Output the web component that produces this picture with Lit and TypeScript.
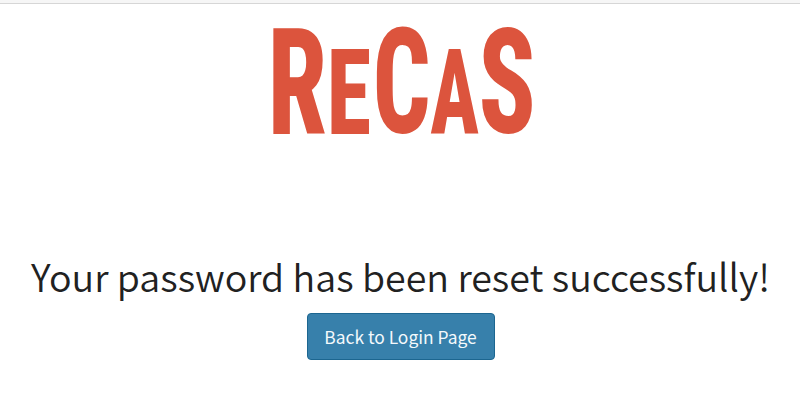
import { LitElement, html, svg, css } from "lit";
import { customElement } from "lit/decorators.js";

// Each letter of the condensed wordmark: left edge, baseline, x and y scale.
const LETTERS = [
  { ch: "R", x: 267.8, y: 133.5, sx: 1.06, sy: 1.477 },
  { ch: "E", x: 326.8, y: 133.5, sx: 0.905, sy: 1.189 },
  { ch: "C", x: 372.8, y: 132.6, sx: 1.01, sy: 1.46 },
  { ch: "A", x: 430.3, y: 133.5, sx: 0.81, sy: 1.196 },
  { ch: "S", x: 478.6, y: 132.6, sx: 1.05, sy: 1.46 },
];

@customElement("recas-logo")
export class RecasLogo extends LitElement {
  static styles = css`
    :host { display: block; }
    svg { display: block; overflow: visible; }
    text {
      font: 800 100px Roboto, sans-serif;
      font-stretch: 75%;
      fill: #dc543d;
    }
  `;
  render() {
    return html`<svg width="280" height="120" viewBox="262 20 280 120" role="img" aria-label="ReCaS">
      ${LETTERS.map((l) => svg`<text transform="matrix(${l.sx} 0 0 ${l.sy} ${l.x} ${l.y})">${l.ch}</text>`)}
    </svg>`;
  }
}

@customElement("app-root")
export class AppRoot extends LitElement {
  static styles = css`
    :host {
      display: flex;
      flex-direction: column;
      align-items: center;
      box-sizing: border-box;
      height: 402px;
      background: #fff;
      color: #212121;
      font-family: "Noto Sans CJK SC", "Noto Sans", sans-serif;
    }
    .bar {
      align-self: stretch;
      flex: none;
      box-sizing: border-box;
      height: 4px;
      background: #f6f6f6;
      border-bottom: 1px solid #d6d6d6;
    }
    recas-logo { margin: 16px 0 0 4px; }
    h1 {
      margin: 108px 0 0 1px;
      font-size: 37.6px;
      line-height: 56px;
      font-weight: 350;
      white-space: nowrap;
    }
    button {
      margin: 9px 0 0 1px;
      box-sizing: border-box;
      width: 188px;
      height: 47px;
      padding: 0;
      border: 1px solid #1c6690;
      border-radius: 4px;
      background: #3780ab;
      color: #f4f9fc;
      font: 400 17.4px/45px "Noto Sans CJK SC", "Noto Sans", sans-serif;
    }
  `;
  render() {
    return html`
      <div class="bar"></div>
      <recas-logo></recas-logo>
      <h1>Your password has been reset successfully!</h1>
      <button>Back to Login Page</button>
    `;
  }
}
